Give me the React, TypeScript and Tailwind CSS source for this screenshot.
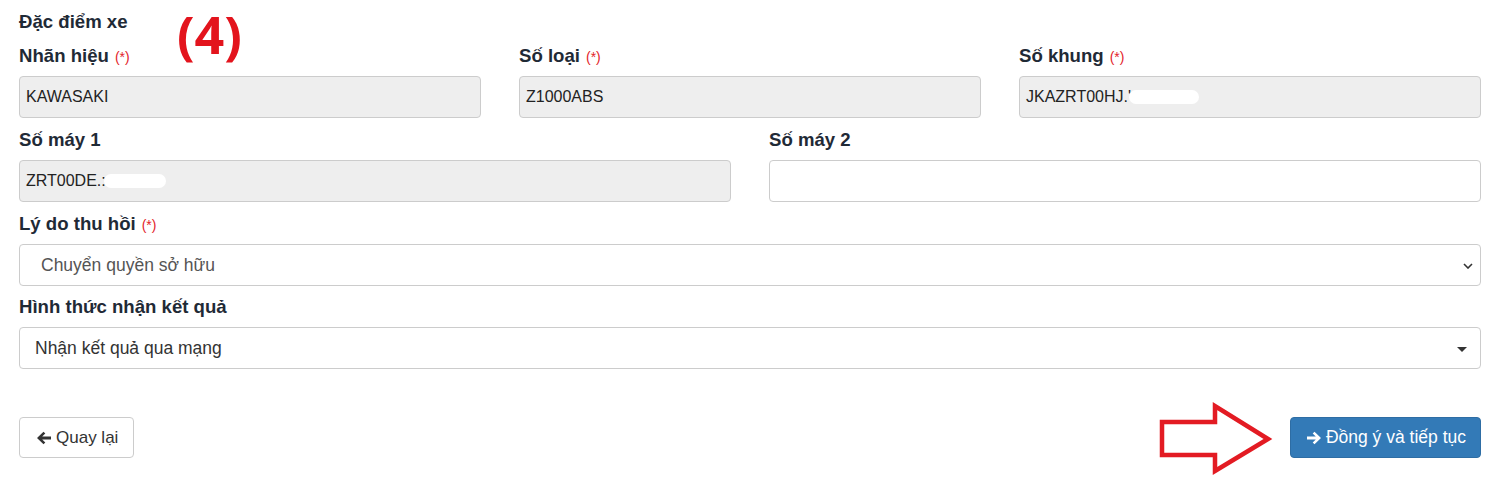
import React from 'react';

const labelCls = "block h-6 mb-2 text-[18.6px] leading-6 font-bold text-[#1f2a36]";

const Req = () => (
  <span className="ml-[6px] text-[14px] font-normal text-[#e3232b]">(*)</span>
);

interface FieldProps {
  label: string;
  required?: boolean;
  value?: string;
  disabled?: boolean;
  masked?: number;
}

const Field: React.FC<FieldProps> = ({ label, required, value, disabled = true, masked }) => (
  <div>
    <label className={labelCls}>
      {label}
      {required && <Req />}
    </label>
    <div
      className={`relative h-[42px] rounded border border-[#cccccc] ${disabled ? 'bg-[#eeeeee]' : 'bg-white'} px-[6px] flex items-center text-[16px] text-[#222]`}
    >
      <span>{value}</span>
      {masked ? (
        <span className="inline-block h-[14px] rounded-full bg-white -ml-[2px]" style={{ width: masked }} />
      ) : null}
    </div>
  </div>
);

const ArrowLeft = ({ className }: { className?: string }) => (
  <svg viewBox="0 0 16 16" className={className} fill="currentColor">
    <path d="M1 8 L7.5 1.8 L9.3 3.6 L6.2 6.6 L15 6.6 L15 9.4 L6.2 9.4 L9.3 12.4 L7.5 14.2 Z" />
  </svg>
);

const ArrowRight = ({ className }: { className?: string }) => (
  <svg viewBox="0 0 16 16" className={className} fill="currentColor">
    <path d="M15 8 L8.5 1.8 L6.7 3.6 L9.8 6.6 L1 6.6 L1 9.4 L9.8 9.4 L6.7 12.4 L8.5 14.2 Z" />
  </svg>
);

export default function App() {
  return (
    <div className="relative w-[1512px] h-[492px] bg-white overflow-hidden" style={{ fontFamily: '"Liberation Sans", Arial, sans-serif' }}>
      <div className="pl-[19px] pr-[31px] pt-[10px] flex flex-col">
        <div className="h-6 mb-[10px] text-[18.6px] leading-6 font-bold text-[#1f2a36]">Đặc điểm xe</div>

        <div className="grid grid-cols-3 gap-x-[38px]">
          <Field label="Nhãn hiệu" required value="KAWASAKI" />
          <Field label="Số loại" required value="Z1000ABS" />
          <Field label="Số khung" required value="JKAZRT00HJ.'" masked={70} />
        </div>

        <div className="grid grid-cols-2 gap-x-[38px] mt-[10px]">
          <Field label="Số máy 1" value="ZRT00DE.:" masked={62} />
          <Field label="Số máy 2" value="" disabled={false} />
        </div>

        <div className="mt-[10px]">
          <label className={labelCls}>
            Lý do thu hồi
            <Req />
          </label>
          <div className="relative h-[42px] rounded border border-[#cccccc] bg-white flex items-center pl-[21px] text-[17.5px] text-[#555]">
            Chuyển quyền sở hữu
            <svg viewBox="0 0 10 6" className="absolute right-[7px] top-[18px] w-[10px] h-[6px]" fill="none" stroke="#333" strokeWidth="1.6">
              <path d="M1 1 L5 5 L9 1" />
            </svg>
          </div>
        </div>

        <div className="mt-[9px]">
          <label className={labelCls}>Hình thức nhận kết quả</label>
          <div className="relative h-[42px] rounded border border-[#cccccc] bg-white flex items-center pl-[15px] text-[17.5px] text-[#333]">
            Nhận kết quả qua mạng
            <span className="absolute right-[13px] top-[19px] w-0 h-0 border-l-[5px] border-r-[5px] border-t-[5px] border-l-transparent border-r-transparent border-t-[#333]" />
          </div>
        </div>

        <div className="mt-[48px] flex justify-between">
          <button className="h-[41px] pl-[16px] pr-[15px] rounded border border-[#cccccc] bg-white flex items-center gap-[4px] text-[17px] text-[#333]">
            <ArrowLeft className="w-[16px] h-[16px] text-[#333]" />
            Quay lại
          </button>
          <button className="h-[41px] pl-[15px] pr-[14px] rounded border border-[#2e6da4] bg-[#337ab7] flex items-center gap-[4px] text-[17.5px] text-white">
            <ArrowRight className="w-[16px] h-[16px] text-white" />
            Đồng ý và tiếp tục
          </button>
        </div>
      </div>

      <div
        className="absolute left-[177px] top-[3px] text-[52px] leading-[1.2] font-bold text-[#e3141d]"
        style={{ fontFamily: '"Open Sans", sans-serif' }}
      >
        (4)
      </div>

      <svg className="absolute left-[1156px] top-[401px]" width="118" height="75" viewBox="0 0 118 75">
        <path
          d="M6 21 L59 21 L59 5 L112 38 L59 70 L59 54 L6 54 Z"
          fill="none"
          stroke="#e31b23"
          strokeWidth="4.5"
          strokeLinejoin="miter"
        />
      </svg>
    </div>
  );
}
